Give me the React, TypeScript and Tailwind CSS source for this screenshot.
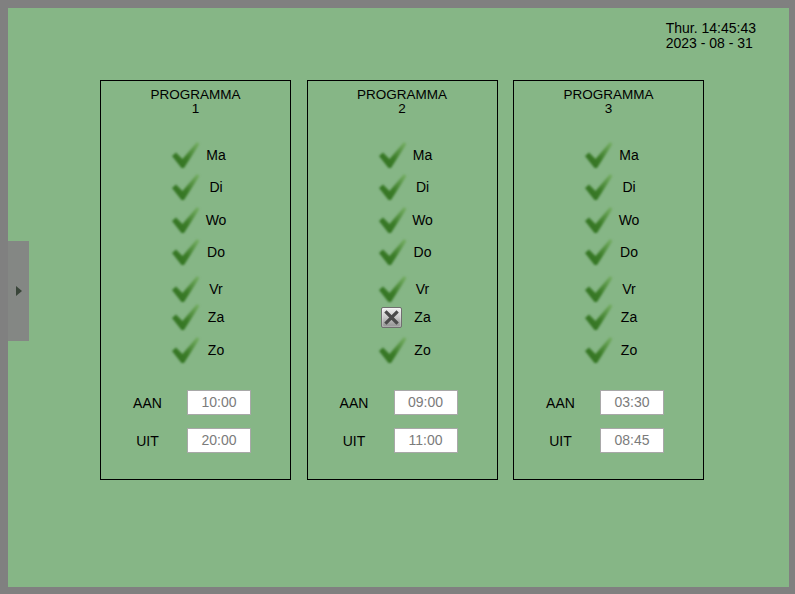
import React from "react";

type Day = { label: string; on: boolean; gap: number };

type Program = {
  id: number;
  days: Day[];
  aan: string;
  uit: string;
};

const gaps = [25, 4, 5, 4, 9, 0, 5];
const labels = ["Ma", "Di", "Wo", "Do", "Vr", "Za", "Zo"];

function makeDays(off: string[] = []): Day[] {
  return labels.map((label, i) => ({ label, on: !off.includes(label), gap: gaps[i] }));
}

const programs: Program[] = [
  { id: 1, days: makeDays(), aan: "10:00", uit: "20:00" },
  { id: 2, days: makeDays(["Za"]), aan: "09:00", uit: "11:00" },
  { id: 3, days: makeDays(), aan: "03:30", uit: "08:45" },
];

function CheckIcon() {
  return (
    <svg width="30" height="30" viewBox="0 0 30 30" className="blur-[1.1px]">
      <defs>
        <linearGradient id="chk" x1="0" y1="1" x2="1" y2="0">
          <stop offset="0" stopColor="#2f6f1f" />
          <stop offset="0.45" stopColor="#3b7c28" />
          <stop offset="1" stopColor="#7ab268" />
        </linearGradient>
      </defs>
      <path d="M2 16 L6 12.5 L12.5 19 L27 2 L29.5 4 L14 28 L11.5 28 Z" fill="url(#chk)" />
    </svg>
  );
}

function CrossIcon() {
  return (
    <div className="flex h-[21px] w-[21px] items-center justify-center rounded-[2px] border border-[#6f6f6f] bg-gradient-to-b from-[#f2f2f2] via-[#c8c8c8] to-[#8e8e8e] shadow-[inset_0_0_2px_rgba(255,255,255,0.9)]">
      <svg width="15" height="15" viewBox="0 0 15 15" className="blur-[0.4px]">
        <path d="M2.5 2.5 L12.5 12.5 M12.5 2.5 L2.5 12.5" stroke="#4a4a4a" strokeWidth="3.2" strokeLinecap="square" />
      </svg>
    </div>
  );
}

function TimeRow({ label, value, top }: { label: string; value: string; top: number }) {
  return (
    <div className="flex items-center" style={{ marginTop: top }}>
      <div className="w-[86px] pl-[7px] pt-[1px] text-center text-[14px] text-black">{label}</div>
      <div className="flex h-[25px] w-[64px] items-center justify-center border border-[#a8a8a8] bg-white text-[14px] text-[#7b7b7b]">
        {value}
      </div>
    </div>
  );
}

function ProgramPanel({ program }: { program: Program }) {
  return (
    <div className="flex h-[400px] w-[191px] flex-col border border-black">
      <div className="pt-[7px] text-center text-[13.5px] leading-[14px] text-black">
        <div>PROGRAMMA</div>
        <div>{program.id}</div>
      </div>

      {program.days.map((day) => (
        <div key={day.label} className="flex h-[28px] items-center" style={{ marginTop: day.gap }}>
          <div className="ml-[69px] flex w-[30px] items-center justify-center">
            {day.on ? <CheckIcon /> : <CrossIcon />}
          </div>
          <div className="w-[32px] text-center text-[14px] text-black">{day.label}</div>
        </div>
      ))}

      <TimeRow label="AAN" value={program.aan} top={26} />
      <TimeRow label="UIT" value={program.uit} top={13} />
    </div>
  );
}

export default function App() {
  return (
    <div
      className="h-[594px] w-[795px] border-b-[7px] border-l-[8px] border-r-[6px] border-t-[8px] border-[#808080] bg-[#86b686]"
      style={{ fontFamily: '"Liberation Sans", Arial, sans-serif' }}
    >
      <div className="relative h-full w-full">
        {/* slide-out tab */}
        <div className="absolute left-0 top-[233px] flex h-[100px] w-[21px] items-center justify-center bg-[#848784]">
          <svg width="6" height="10" viewBox="0 0 6 10">
            <path d="M0 0 L6 5 L0 10 Z" fill="#394539" />
          </svg>
        </div>

        <div className="flex justify-end pr-[33px] pt-[13px]">
          <div className="text-[14px] leading-[15px] text-black">
            <div>Thur. 14:45:43</div>
            <div>2023 - 08 - 31</div>
          </div>
        </div>

        <div className="ml-[92px] mt-[29px] flex gap-[15.5px]">
          {programs.map((p) => (
            <ProgramPanel key={p.id} program={p} />
          ))}
        </div>
      </div>
    </div>
  );
}
